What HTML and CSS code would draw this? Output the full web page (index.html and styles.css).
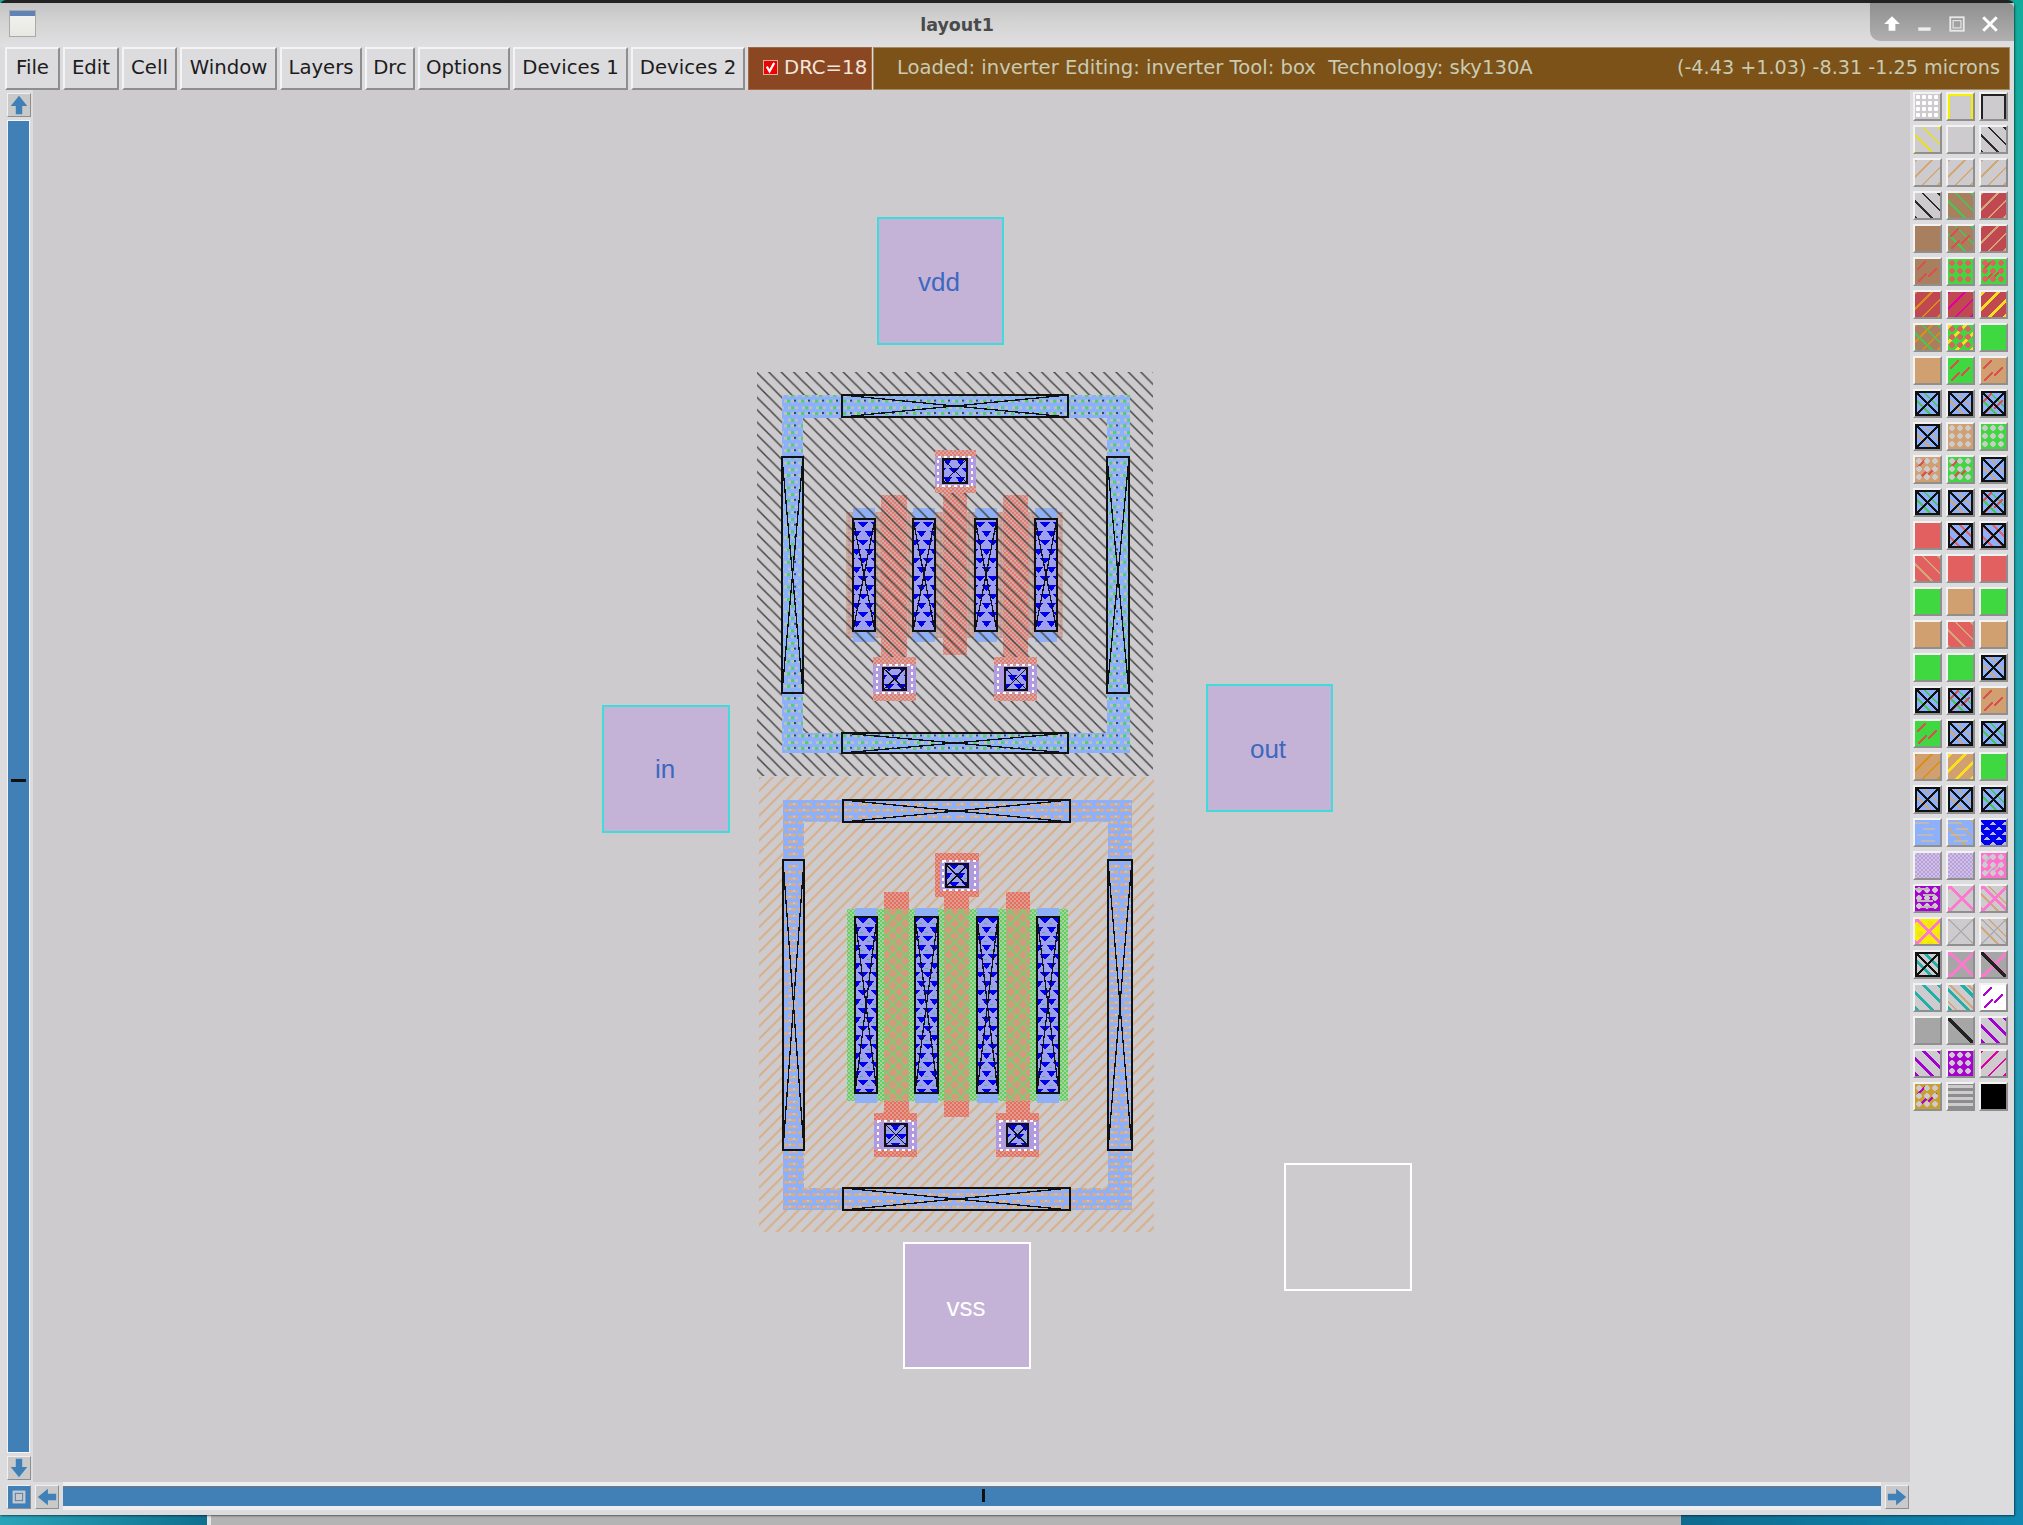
FILE: index.html
```html
<!DOCTYPE html>
<html lang="en">
<head>
<meta charset="utf-8">
<title>layout1</title>
<link rel="stylesheet" href="styles.css">
</head>
<body>
<div class="back-window"></div>
<div class="window">
  <header class="titlebar">
    <span class="app-icon"></span>
    <span class="title">layout1</span>
    <div class="wm-controls">
      <svg class="wm" viewBox="0 0 16 16"><path d="M8 1L15 8H11V14H5V8H1Z" fill="#fff"/></svg>
      <svg class="wm" viewBox="0 0 16 16"><rect x="2" y="11" width="11" height="3" fill="#eee"/></svg>
      <svg class="wm" viewBox="0 0 16 16"><rect x="2" y="2" width="12" height="12" fill="none" stroke="#e8e8e8" stroke-width="1.6"/><rect x="4.5" y="5" width="7" height="6.5" fill="none" stroke="#e8e8e8"/></svg>
      <svg class="wm" viewBox="0 0 16 16"><path d="M2 2L14 14M14 2L2 14" stroke="#fff" stroke-width="2.6"/></svg>
    </div>
  </header>
  <nav class="menubar">
    <span class="menu m-file">File</span>
    <span class="menu m-edit">Edit</span>
    <span class="menu m-cell">Cell</span>
    <span class="menu m-window">Window</span>
    <span class="menu m-layers">Layers</span>
    <span class="menu m-drc">Drc</span>
    <span class="menu m-options">Options</span>
    <span class="menu m-dev1">Devices 1</span>
    <span class="menu m-dev2">Devices 2</span>
    <span class="drc-flag"><span class="check"><svg viewBox="0 0 14 14"><path d="M3 6L6 11L11 2" fill="none" stroke="#fff" stroke-width="2.4"/></svg></span>DRC=18</span>
    <div class="status">
      <span class="status-text">Loaded: inverter Editing: inverter Tool: box  Technology: sky130A</span>
      <span class="coords">(-4.43 +1.03) -8.31 -1.25 microns</span>
    </div>
  </nav>
  <div class="workspace">
    <div class="vscroll">
      <span class="sbtn"><svg viewBox="0 0 24 24"><path d="M12 2L21 13H15.500V22H8.500V13H3Z"/></svg></span>
      <div class="vtrough"><span class="vmark"></span></div>
      <span class="sbtn"><svg viewBox="0 0 24 24"><path d="M12 22L21 11H15.500V2H8.500V11H3Z"/></svg></span>
    </div>
    <main class="canvas">
      <svg class="board" viewBox="33 90 1877 1392" width="1877" height="1392">
        <defs>
          <pattern id="hb" width="12.400" height="12.400" patternUnits="userSpaceOnUse"><path shape-rendering="auto" d="M-2 -2L14.400 14.400M-2 10.400L2 14.400M10.400 -2L14.400 2" stroke="#454545" stroke-width="1.500" fill="none"/></pattern>
          <pattern id="ht" width="12.400" height="12.400" patternUnits="userSpaceOnUse"><path shape-rendering="auto" d="M-2 14.400L14.400 -2M-2 2L2 -2M10.400 14.400L14.400 10.400" stroke="#d8ae86" stroke-width="1.900" fill="none"/></pattern>
          <pattern id="pu" width="4" height="4" patternUnits="userSpaceOnUse"><rect width="4" height="4" fill="#d6a8a4"/><rect width="2" height="2" fill="#e07c70"/><rect x="2" y="2" width="2" height="2" fill="#e07c70"/></pattern>
          <pattern id="pl" width="4" height="4" patternUnits="userSpaceOnUse"><rect width="4" height="4" fill="#e39a8e"/><rect width="2" height="2" fill="#e4705f"/><rect x="2" y="2" width="2" height="2" fill="#e4705f"/></pattern>
          <pattern id="du" width="4" height="4" patternUnits="userSpaceOnUse"><rect width="4" height="4" fill="#c9a7a6"/><rect width="2" height="2" fill="#c19a94"/><rect x="2" y="2" width="2" height="2" fill="#d1ae97"/></pattern>
          <pattern id="dl" width="4" height="4" patternUnits="userSpaceOnUse"><rect width="4" height="4" fill="#a8d2a0"/><rect width="2" height="2" fill="#62d061"/><rect x="2" y="2" width="2" height="2" fill="#62d061"/></pattern>
          <pattern id="tr" width="12.400" height="12.400" patternUnits="userSpaceOnUse"><rect width="12.400" height="12.400" fill="#d59a7e"/><path shape-rendering="auto" d="M-2 -2L14.400 14.400M-2 14.400L14.400 -2M-2 10.400L2 14.400M10.400 -2L14.400 2M-2 2L2 -2M10.400 14.400L14.400 10.400" stroke="#78cf70" stroke-width="1.800" fill="none"/></pattern>
          <pattern id="ru" width="14" height="12.400" patternUnits="userSpaceOnUse"><rect width="14" height="12.400" fill="#8cb0fb"/><rect x="0" y="3" width="3" height="3" fill="#b9c4b4"/><rect x="3" y="3" width="3" height="3" fill="#4fce73"/><rect x="7" y="3" width="3" height="3" fill="#b9c4b4"/><rect x="10" y="3" width="1.500" height="2" fill="#334466"/><rect x="3.500" y="9.200" width="3" height="3" fill="#b9c4b4"/><rect x="6.500" y="9.200" width="3" height="3" fill="#4fce73"/><rect x="10.500" y="9.200" width="3" height="3" fill="#b9c4b4"/></pattern>
          <pattern id="rl" width="14" height="12.400" patternUnits="userSpaceOnUse"><rect width="14" height="12.400" fill="#8cb0fb"/><rect x="0" y="3" width="5" height="3" fill="#d8ac84"/><rect x="5" y="3" width="2" height="2" fill="#c8c8d0"/><rect x="7" y="3" width="5" height="3" fill="#d8ac84"/><rect x="3.500" y="9.200" width="5" height="3" fill="#d8ac84"/><rect x="8.500" y="9.200" width="2" height="2" fill="#c8c8d0"/><rect x="10.500" y="9.200" width="3.500" height="3" fill="#d8ac84"/></pattern>
          <pattern id="tu" width="13" height="18" patternUnits="userSpaceOnUse"><rect width="13" height="18" fill="#9ea0ee"/><path d="M0 0H10L5 6ZM6.500 9H16.500L11.500 15ZM-6.500 9H3.500L-1.500 15Z" fill="#0000f0"/></pattern>
          <pattern id="tl" width="13" height="18" patternUnits="userSpaceOnUse"><rect width="13" height="18" fill="#9ea0ee"/><path d="M0 0H10L5 6ZM6.500 9H16.500L11.500 15ZM-6.500 9H3.500L-1.500 15Z" fill="#0000f0"/><rect x="9" y="5" width="3" height="1" fill="#40c080"/><rect x="2" y="14" width="3" height="1" fill="#40c080"/></pattern>
        </defs>

        <rect class="f-poly-u" x="881" y="495" width="26" height="162"/>
        <rect class="f-poly-u" x="943" y="493" width="24" height="162"/>
        <rect class="f-poly-u" x="1003" y="495" width="25" height="162"/>
        <rect class="f-diff-u" x="846" y="512" width="35" height="126"/>
        <rect class="f-diff-u" x="907" y="512" width="36" height="126"/>
        <rect class="f-diff-u" x="967" y="512" width="36" height="126"/>
        <rect class="f-diff-u" x="1028" y="512" width="35" height="126"/>
        <rect class="f-blue" x="853" y="508" width="22" height="134"/>
        <rect class="f-blue" x="913" y="508" width="22" height="134"/>
        <rect class="f-blue" x="975" y="508" width="22" height="134"/>
        <rect class="f-blue" x="1035" y="508" width="22" height="134"/>
        <rect class="f-hatch-k" x="757" y="372" width="396" height="404"/>
        <path class="f-ring-u" d="M782 395H1130V753H782ZM803 418V733H1107V418Z"/>

        <g class="ct">
          <rect class="f-ring-u" x="842" y="395" width="226" height="22"/><path d="M842 395L1068 417M842 417L1068 395"/>
          <rect class="f-ring-u" x="842" y="733" width="226" height="20"/><path d="M842 733L1068 753M842 753L1068 733"/>
          <rect class="f-ring-u" x="782" y="457" width="21" height="236"/><path d="M782 457L803 693M803 457L782 693"/>
          <rect class="f-ring-u" x="1107" y="457" width="22" height="236"/><path d="M1107 457L1129 693M1129 457L1107 693"/>
          <rect class="f-tri-u" x="853" y="519" width="22" height="112"/><path d="M853 519L875 631M875 519L853 631"/>
          <rect class="f-tri-u" x="913" y="519" width="22" height="112"/><path d="M913 519L935 631M935 519L913 631"/>
          <rect class="f-tri-u" x="975" y="519" width="22" height="112"/><path d="M975 519L997 631M997 519L975 631"/>
          <rect class="f-tri-u" x="1035" y="519" width="22" height="112"/><path d="M1035 519L1057 631M1057 519L1035 631"/>
        </g>

        <g class="pad">
          <rect class="f-poly-u" x="935" y="450" width="41" height="43"/><rect class="f-padcore" x="935" y="457" width="41" height="29"/><rect class="dots" x="938" y="457" width="34" height="29"/>
          <rect class="f-poly-u" x="873" y="657" width="43" height="44"/><rect class="f-padcore" x="873" y="665" width="43" height="28"/><rect class="dots" x="877" y="665" width="35" height="28"/>
          <rect class="f-poly-u" x="994" y="657" width="43" height="44"/><rect class="f-padcore" x="994" y="665" width="43" height="28"/><rect class="dots" x="998" y="665" width="35" height="28"/>
        </g>
        <g class="ct">
          <rect class="f-tri-u" x="943" y="459" width="24" height="24"/><path d="M943 459L967 483M967 459L943 483"/>
          <rect class="f-tri-u" x="883" y="668" width="23" height="22"/><path d="M883 668L906 690M906 668L883 690"/>
          <rect class="f-tri-u" x="1005" y="668" width="22" height="22"/><path d="M1005 668L1027 690M1027 668L1005 690"/>
        </g>

        <rect class="f-hatch-t" x="759" y="777" width="395" height="455"/>
        <path class="f-ring-l" d="M783 800H1132V1210H783ZM804 822V1188H1108V822Z"/>
        <rect class="f-poly-l" x="884" y="892" width="25" height="221"/>
        <rect class="f-poly-l" x="944" y="897" width="25" height="220"/>
        <rect class="f-poly-l" x="1006" y="892" width="24" height="221"/>
        <rect class="f-diff-l" x="847" y="909" width="221" height="192"/>
        <rect class="f-trans" x="884" y="909" width="25" height="192"/>
        <rect class="f-trans" x="944" y="909" width="25" height="192"/>
        <rect class="f-trans" x="1006" y="909" width="24" height="192"/>
        <rect class="f-blue" x="855" y="908" width="22" height="195"/>
        <rect class="f-blue" x="915" y="908" width="23" height="195"/>
        <rect class="f-blue" x="977" y="908" width="21" height="195"/>
        <rect class="f-blue" x="1037" y="908" width="22" height="195"/>

        <g class="ct">
          <rect class="f-ring-l" x="843" y="800" width="227" height="22"/><path d="M843 800L1070 822M843 822L1070 800"/>
          <rect class="f-ring-l" x="843" y="1188" width="227" height="22"/><path d="M843 1188L1070 1210M843 1210L1070 1188"/>
          <rect class="f-ring-l" x="783" y="860" width="21" height="290"/><path d="M783 860L804 1150M804 860L783 1150"/>
          <rect class="f-ring-l" x="1108" y="860" width="24" height="290"/><path d="M1108 860L1132 1150M1132 860L1108 1150"/>
          <rect class="f-tri-l" x="855" y="917" width="22" height="176"/><path d="M855 917L877 1093M877 917L855 1093"/>
          <rect class="f-tri-l" x="915" y="917" width="23" height="176"/><path d="M915 917L938 1093M938 917L915 1093"/>
          <rect class="f-tri-l" x="977" y="917" width="21" height="176"/><path d="M977 917L998 1093M998 917L977 1093"/>
          <rect class="f-tri-l" x="1037" y="917" width="22" height="176"/><path d="M1037 917L1059 1093M1059 917L1037 1093"/>
        </g>
        <g class="pad">
          <rect class="f-poly-l" x="935" y="853" width="44" height="44"/><rect class="f-padcore" x="940" y="861" width="39" height="29"/><rect class="dots" x="943" y="861" width="32" height="29"/>
          <rect class="f-poly-l" x="874" y="1113" width="43" height="44"/><rect class="f-padcore" x="874" y="1121" width="43" height="29"/><rect class="dots" x="878" y="1121" width="35" height="29"/>
          <rect class="f-poly-l" x="996" y="1113" width="43" height="44"/><rect class="f-padcore" x="996" y="1121" width="43" height="29"/><rect class="dots" x="1000" y="1121" width="35" height="29"/>
        </g>
        <g class="ct">
          <rect class="f-tri-l" x="946" y="864" width="22" height="23"/><path d="M946 864L968 887M968 864L946 887"/>
          <rect class="f-tri-l" x="885" y="1124" width="22" height="22"/><path d="M885 1124L907 1146M907 1124L885 1146"/>
          <rect class="f-tri-l" x="1007" y="1124" width="21" height="22"/><path d="M1007 1124L1028 1146M1028 1124L1007 1146"/>
        </g>

        <rect class="lbl" x="878" y="218" width="125" height="126"/>
        <text class="lbl-t" x="939" y="291">vdd</text>
        <rect class="lbl" x="603" y="706" width="126" height="126"/>
        <text class="lbl-t" x="665" y="778">in</text>
        <rect class="lbl" x="1207" y="685" width="125" height="126"/>
        <text class="lbl-t" x="1268" y="758">out</text>
        <rect class="lbl lbl-w" x="904" y="1243" width="126" height="125"/>
        <text class="lbl-t lbl-tw" x="966" y="1316">vss</text>
        <rect class="empty" x="1285" y="1164" width="126" height="126"/>
      </svg>
    </main>
    <aside class="layers">
      <span class="lyr b-g dots-w"></span><span class="lyr b-g out-y"></span><span class="lyr b-g out-k"></span>
      <span class="lyr b-g bk-y"></span><span class="lyr b-g"></span><span class="lyr b-g bk-k"></span>
      <span class="lyr b-g fw-t"></span><span class="lyr b-g fw-t"></span><span class="lyr b-g fw-t"></span>
      <span class="lyr b-g bk-k"></span><span class="lyr b-br bk-g"></span><span class="lyr b-rd fw-t"></span>
      <span class="lyr b-br"></span><span class="lyr b-br bk-g ds-r"></span><span class="lyr b-rd fw-t"></span>
      <span class="lyr b-br ds-r"></span><span class="lyr b-gr dots-r"></span><span class="lyr b-gr dots-r ds-r"></span>
      <span class="lyr b-rd fw-o"></span><span class="lyr b-rd fw-m"></span><span class="lyr b-rd fw-y"></span>
      <span class="lyr b-br bk-g fw-o"></span><span class="lyr b-gr fw-y dots-r"></span><span class="lyr b-gr"></span>
      <span class="lyr b-tn"></span><span class="lyr b-gr ds-r"></span><span class="lyr b-tn ds-r"></span>
      <span class="lyr b-bl bk-g x"></span><span class="lyr b-bl bk-t x"></span><span class="lyr b-bl bk-g ds-r x"></span>
      <span class="lyr b-bl bk-t x"></span><span class="lyr b-tn dots-g"></span><span class="lyr b-gr dots-g"></span>
      <span class="lyr b-tn dots-g ds-r"></span><span class="lyr b-gr dots-g ds-r"></span><span class="lyr b-bl bk-t x"></span>
      <span class="lyr b-bl bk-g x"></span><span class="lyr b-bl bk-t x"></span><span class="lyr b-bl bk-g ds-r x"></span>
      <span class="lyr b-cr"></span><span class="lyr b-bl bk-r x"></span><span class="lyr b-bl bk-r x"></span>
      <span class="lyr b-cr bk-t"></span><span class="lyr b-cr"></span><span class="lyr b-cr"></span>
      <span class="lyr b-gr"></span><span class="lyr b-tn"></span><span class="lyr b-gr"></span>
      <span class="lyr b-tn"></span><span class="lyr b-cr bk-t"></span><span class="lyr b-tn"></span>
      <span class="lyr b-gr"></span><span class="lyr b-gr"></span><span class="lyr b-bl bk-t x"></span>
      <span class="lyr b-bl bk-g x"></span><span class="lyr b-bl bk-g ds-r x"></span><span class="lyr b-tn ds-r"></span>
      <span class="lyr b-gr ds-r"></span><span class="lyr b-bl bk-t x"></span><span class="lyr b-bl bk-g x"></span>
      <span class="lyr b-tn fw-o"></span><span class="lyr b-tn fw-y"></span><span class="lyr b-gr"></span>
      <span class="lyr b-bl bk-t x"></span><span class="lyr b-bl bk-t x"></span><span class="lyr b-bl bk-g x"></span>
      <span class="lyr b-bl wave-g"></span><span class="lyr b-bl wave-g bk-t"></span><span class="lyr b-g tri-b"></span>
      <span class="lyr b-li chk-li"></span><span class="lyr b-li chk-li bk-t"></span><span class="lyr b-pk dots-g ds-g"></span>
      <span class="lyr b-pu dots-g wave-g"></span><span class="lyr b-g dia-p"></span><span class="lyr b-g dia-p bk-t"></span>
      <span class="lyr b-ye dia-p dots-y"></span><span class="lyr b-g dia-g"></span><span class="lyr b-g dia-g bk-t"></span>
      <span class="lyr b-g bk-te x"></span><span class="lyr b-dg dia-p"></span><span class="lyr b-dg dia-p line-k"></span>
      <span class="lyr b-g bk-te"></span><span class="lyr b-g bk-te2"></span><span class="lyr b-w ds-p"></span>
      <span class="lyr b-dg"></span><span class="lyr b-dg line-k"></span><span class="lyr b-g bk-p"></span>
      <span class="lyr b-g bk-p"></span><span class="lyr b-pu dots-g"></span><span class="lyr b-g fw-m"></span>
      <span class="lyr b-go dots-g ds-p"></span><span class="lyr b-g wave-d"></span><span class="lyr b-k"></span>
    </aside>
    <div class="hscroll">
      <span class="sbtn corner"><svg viewBox="0 0 24 24"><rect width="24" height="24"/><rect x="5" y="5" width="14" height="14" fill="#c9c9c9"/><rect x="8" y="8" width="8" height="8" fill="#c9c9c9" stroke="#4080b8"/></svg></span>
      <span class="sbtn"><svg viewBox="0 0 24 24"><path d="M2 12L13 3V8.500H22V15.500H13V21Z"/></svg></span>
      <div class="htrough"><span class="hmark"></span></div>
      <span class="sbtn"><svg viewBox="0 0 24 24"><path d="M22 12L11 3V8.500H2V15.500H11V21Z"/></svg></span>
    </div>
  </div>
</div>
</body>
</html>
```
FILE: styles.css
```css
* { box-sizing: border-box; }
html, body { margin: 0; height: 100%; }
body {
  width: 2023px; height: 1525px; overflow: hidden; position: relative;
  background:
    linear-gradient(90deg, #2aa4b8, #0f7090 10%, #0f6a8e 83%, #1088b2) 0 1515px / 100% 10px no-repeat,
    linear-gradient(180deg, #12ac9c 0%, #28a0b4 60%, #1088b0 100%);
  font-family: "DejaVu Sans", sans-serif;
}
.back-window { position: absolute; left: 207px; top: 1500px; width: 1474px; height: 25px; background: #b4b4b4; border-left: 4px solid #e4e4e4; }
.window {
  position: relative; width: 2014px; height: 1515px; display: flex; flex-direction: column;
  background: #dcdbde; border-top: 3px solid #222; border-radius: 6px 6px 0 0; box-shadow: 1px 1px 2px rgba(0,0,0,.5);
}
.titlebar {
  height: 44px; position: relative; display: flex; align-items: center; justify-content: center;
  background: linear-gradient(#c4c4c4, #d4d4d4 45%, #e0e0e2);
}
.app-icon {
  position: absolute; left: 9px; top: 7px; width: 27px; height: 27px;
  background: linear-gradient(#5f83b6 0 5px, #f0f0ee 5px, #e8e8e2);
  border: 1px solid #aaa;
}
.title { font-weight: 700; font-size: 17.500px; color: #4a4a4a; margin-left: -100px; }
.wm-controls {
  position: absolute; right: 0; top: 0; width: 144px; height: 38px; padding: 3px 0 0 13px;
  display: flex; align-items: center; gap: 14.700px;
  background: linear-gradient(#8f8f8f, #b0b0b0); border-radius: 0 6px 0 10px;
}
.wm { width: 18px; height: 18px; flex: none; }
.menubar { height: 43px; display: flex; align-items: stretch; padding: 0 4px 0 5px; gap: 3px; font-size: 19.700px; }
.menu {
  display: flex; align-items: center; justify-content: center; color: #1c1c1c; padding-bottom: 2px;
  border: 2px solid; border-color: #f4f4f4 #8e8e8e #8e8e8e #f4f4f4;
}
.m-file { width: 55px; } .m-edit { width: 56px; } .m-cell { width: 55px; } .m-window { width: 97px; }
.m-layers { width: 82px; } .m-drc { width: 50px; } .m-options { width: 92px; } .m-dev1 { width: 115px; } .m-dev2 { width: 114px; }
.drc-flag {
  width: 124px; display: flex; align-items: center; gap: 6px; padding: 0 0 2px 14px;
  background: #8b4722; color: #f2e6dc; border: 1px solid #a06a48; margin-right: -2px; margin-left: 0;
}
.check { width: 15px; height: 15px; background: #f00000; border: 1px solid #d8b0a0; display: block; flex: none; }
.check svg { display: block; width: 100%; height: 100%; }
.status {
  flex: 1; display: flex; justify-content: space-between; align-items: center; padding: 0 9px 2px 23px;
  background: #7c5218; color: #c9cbb4; border: 1px solid #a88a60; white-space: pre; font-size: 19.600px;
}
.coords { font-size: 19.200px; }
.workspace { flex: 1; display: grid; grid-template-columns: 33px 1877px 104px; grid-template-rows: 1392px 33px; }
.vscroll { display: flex; flex-direction: column; align-items: flex-start; padding: 3px 0 2px 7px; gap: 3px; }
.sbtn { display: block; width: 24px; height: 24px; flex: none; background: #c9c9c9; border: 1px solid; border-color: #f0f0f0 #8e8e8e #8e8e8e #f0f0f0; }
.sbtn svg { display: block; width: 100%; height: 100%; fill: #4080b8; }
.vtrough { flex: 1; width: 23px; position: relative; background: #4180b7; border: 1px solid; border-color: #f4f4f4; }
.vmark { position: absolute; left: 3px; top: 658px; width: 15px; height: 3px; background: #111; }
.canvas { background: #cdcbce; position: relative; overflow: hidden; }
.board { display: block; shape-rendering: crispEdges; }
.layers { grid-row: 1 / span 2; grid-column: 3; display: grid; grid-template-columns: repeat(3, 29px); grid-auto-rows: 29px; gap: 4px; padding: 2px 0 0 3px; align-content: start; }
.lyr {
  display: block; border: 2px solid; border-color: #f2f2f2 #8f8f8f #8f8f8f #f2f2f2;
  background: var(--x, none), var(--l, none), var(--d, none), var(--s, none), var(--o1, none), var(--o2, none), var(--o3, none), var(--b);
  background-clip: padding-box; background-origin: padding-box;
}
.b-g { --b: #cdcbce; } .b-gr { --b: #40d840; } .b-tn { --b: #d0a070; } .b-br { --b: #a8805f; }
.b-rd { --b: #c04850; } .b-cr { --b: #e26060; } .b-bl { --b: #8cb0fb; } .b-li { --b: #c8b0e0; }
.b-pk { --b: #ff70d0; } .b-pu { --b: #a800d0; } .b-ye { --b: #f4f000; } .b-dg { --b: #a6a6a6; }
.b-w { --b: #fff; } .b-k { --b: #000; } .b-go { --b: #c8a030; }
.bk-k { --o1: repeating-linear-gradient(45deg, #2a2a2a 0 2px, transparent 2px 11px); }
.bk-y { --o1: repeating-linear-gradient(45deg, #e8e020 0 2px, transparent 2px 11px); }
.bk-g { --o1: repeating-linear-gradient(45deg, #46c850 0 2px, transparent 2px 11px); }
.bk-t { --o1: repeating-linear-gradient(45deg, #d3a878 0 2px, transparent 2px 11px); }
.bk-r { --o1: repeating-linear-gradient(45deg, #e86060 0 2px, transparent 2px 8px); }
.bk-te { --o1: repeating-linear-gradient(45deg, #20b0a8 0 3px, transparent 3px 11px); }
.bk-te2 { --o1: repeating-linear-gradient(45deg, #20b0a8 0 3px, #cdcbce 3px 5px, #d3a878 5px 7px, transparent 7px 13px); }
.bk-p { --o1: repeating-linear-gradient(45deg, #a000d0 0 3px, transparent 3px 11px); }
.fw-t { --o2: repeating-linear-gradient(135deg, #d3a878 0 2px, transparent 2px 11px); }
.fw-o { --o2: repeating-linear-gradient(135deg, #d89018 0 2px, transparent 2px 11px); }
.fw-m { --o2: repeating-linear-gradient(135deg, #e000a0 0 2px, transparent 2px 11px); }
.fw-y { --o2: repeating-linear-gradient(135deg, #f8e020 0 3px, transparent 3px 11px); }
.ds-r, .ds-p, .ds-g { --dc: #d85050; --s:
  linear-gradient(135deg, transparent 42%, var(--dc) 42% 58%, transparent 58%) 2px 2px / 9px 9px no-repeat,
  linear-gradient(135deg, transparent 42%, var(--dc) 42% 58%, transparent 58%) 13px 9px / 9px 9px no-repeat,
  linear-gradient(135deg, transparent 42%, var(--dc) 42% 58%, transparent 58%) 3px 14px / 9px 9px no-repeat; }
.ds-p { --dc: #b000d0; } .ds-g { --dc: #c0c0c0; }
.dots-w { --d: radial-gradient(circle, #fff 2px, transparent 2.500px) 0 0 / 6px 6px; }
.dots-r { --d: radial-gradient(circle, #e06060 2.500px, transparent 3px) 0 0 / 8px 8px; }
.dots-g { --d: radial-gradient(circle, #cdcbce 2.500px, transparent 3px) 0 0 / 8px 8px; }
.dots-y { --d: radial-gradient(circle, #f0e020 3px, transparent 3.500px) 0 0 / 10px 10px; }
.wave-g { --l: linear-gradient(#bdb9b9, #bdb9b9) 0 2px / 14px 2px no-repeat, linear-gradient(#bdb9b9, #bdb9b9) 8px 8px / 12px 2px no-repeat, linear-gradient(#bdb9b9, #bdb9b9) 2px 14px / 16px 2px no-repeat, linear-gradient(#bdb9b9, #bdb9b9) 6px 20px / 14px 2px no-repeat; }
.wave-d { --l: repeating-linear-gradient(0deg, #8d8d8d 0 3px, transparent 3px 6px); }
.tri-b { --b: #b8b8e0; --l: conic-gradient(from -40deg at 50% 80%, #0000f0 80deg, transparent 0) 0 0 / 12px 10px, conic-gradient(from -40deg at 50% 80%, #0000f0 80deg, transparent 0) 6px 5px / 12px 10px; }
.chk-li { --l: repeating-conic-gradient(#b8a0d8 0 25%, #d0c0e8 0 50%) 0 0 / 4px 4px; }
.dia-p { --l: repeating-linear-gradient(45deg, #ff78d0 0 3px, transparent 3px 17px), repeating-linear-gradient(135deg, #ff78d0 0 3px, transparent 3px 17px); }
.dia-g { --l: repeating-linear-gradient(45deg, #aeaeae 0 2px, transparent 2px 17px), repeating-linear-gradient(135deg, #aeaeae 0 2px, transparent 2px 17px); }
.line-k { --x: linear-gradient(45deg, transparent calc(50% - 1.500px), #222 calc(50% - 1.500px) calc(50% + 1.500px), transparent calc(50% + 1.500px)); }
.x { --x: linear-gradient(45deg, transparent calc(50% - 1.200px), #111 calc(50% - 1.200px) calc(50% + 1.200px), transparent calc(50% + 1.200px)), linear-gradient(135deg, transparent calc(50% - 1.200px), #111 calc(50% - 1.200px) calc(50% + 1.200px), transparent calc(50% + 1.200px)); box-shadow: inset 0 0 0 2px #111; }
.out-y { box-shadow: inset 2px 2px 0 #f4f000, inset -2px 0 0 #f4f000; }
.out-k { box-shadow: inset 2px 2px 0 #222, inset -2px 0 0 #222; }
.hscroll { grid-column: 1 / span 2; grid-row: 2; display: flex; align-items: flex-start; padding: 3px 1px 0 7px; gap: 4px; }
.corner svg { fill: #4080b8; }
.htrough { flex: 1; height: 28px; margin-top: -3px; position: relative; background: #4180b7; border-top: 4px solid #eeeef0; border-bottom: 4px solid #eeeef0; box-shadow: inset 0 1px 0 #777; }
.hmark { position: absolute; left: 919px; top: 3px; width: 3px; height: 13px; background: #111; }
.f-poly-u { fill: url(#pu); } .f-poly-l { fill: url(#pl); } .f-diff-u { fill: url(#du); } .f-diff-l { fill: url(#dl); }
.f-blue { fill: #8fb0f4; } .f-hatch-k { fill: url(#hb); } .f-hatch-t { fill: url(#ht); } .f-trans { fill: url(#tr); }
.f-ring-u { fill: url(#ru); } .f-ring-l { fill: url(#rl); } .f-tri-u { fill: url(#tu); } .f-tri-l { fill: url(#tl); }
.f-padcore { fill: #b09ae0; }
.dots { fill: none; stroke: #fff; stroke-width: 2; stroke-dasharray: 3 3; }
.ct rect { stroke: #111; stroke-width: 1.600; }
.ct path { stroke: #111; stroke-width: 1.300; fill: none; }
.lbl { fill: #c5b3d7; stroke: #3fdcdc; stroke-width: 2; }
.lbl-w { stroke: #fff; }
.empty { fill: none; stroke: #fff; stroke-width: 2; }
.lbl-t { font-family: "Liberation Sans", sans-serif; font-size: 26px; fill: #3d68c0; text-anchor: middle; }
.lbl-tw { fill: #fff; }
```
